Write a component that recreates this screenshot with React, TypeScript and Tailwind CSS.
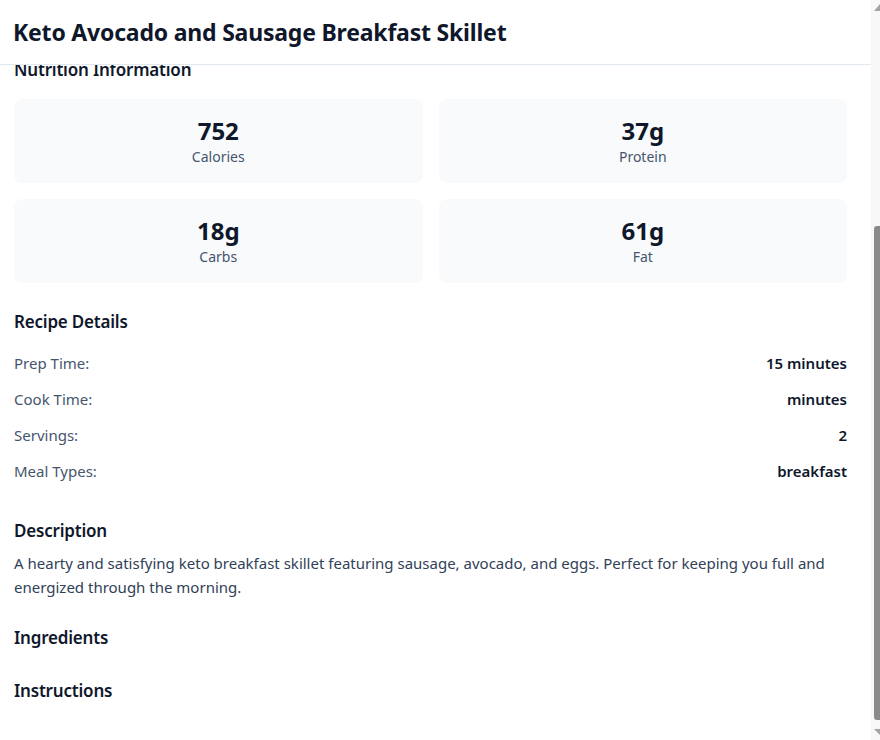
import { useLayoutEffect, useRef } from "react";

const nutrition = [
  { value: "752", label: "Calories" },
  { value: "37g", label: "Protein" },
  { value: "18g", label: "Carbs" },
  { value: "61g", label: "Fat" },
];

const details: [string, string][] = [
  ["Prep Time:", "15 minutes"],
  ["Cook Time:", "minutes"],
  ["Servings:", "2"],
  ["Meal Types:", "breakfast"],
];

function Heading({ children }: { children: React.ReactNode }) {
  return (
    <h3 className="pt-[2px] text-[17px] font-semibold leading-[26px] tracking-[-0.2px] text-slate-900">
      {children}
    </h3>
  );
}

export default function App() {
  const ref = useRef<HTMLDivElement>(null);
  useLayoutEffect(() => {
    if (ref.current) ref.current.scrollTop = 320;
  }, []);

  return (
    <div className="flex h-[740px] w-[880px] bg-white font-['Noto_Sans',sans-serif] text-slate-900">
      <div
        ref={ref}
        className="h-full min-w-0 flex-1 overflow-y-scroll [scrollbar-width:none] [&::-webkit-scrollbar]:hidden"
      >
        <header className="sticky top-0 z-10 flex h-[65px] items-center border-b border-slate-200 bg-white pl-[13px]">
          <h1 className="text-[23px] font-bold leading-8 tracking-[-0.2px] text-slate-900">
            Keto Avocado and Sausage Breakfast Skillet
          </h1>
        </header>

        <div className="pl-[14px] pr-6 pt-4 pb-12">
          <div className="mb-6 h-[270px] rounded-lg bg-gradient-to-br from-green-200 to-amber-200" />

          <section>
            <div className="mb-4">
              <Heading>Nutrition Information</Heading>
            </div>
            <div className="grid grid-cols-2 gap-4">
              {nutrition.map((n) => (
                <div key={n.label} className="rounded-lg bg-slate-50 p-4 text-center">
                  <div className="text-2xl font-bold leading-8 text-slate-900">{n.value}</div>
                  <div className="text-sm leading-5 text-slate-600">{n.label}</div>
                </div>
              ))}
            </div>
          </section>

          <section className="mt-6">
            <div className="mb-[10px]">
              <Heading>Recipe Details</Heading>
            </div>
            <div>
              {details.map(([k, v]) => (
                <div key={k} className="flex h-9 items-center justify-between text-[15px]">
                  <span className="text-slate-600">{k}</span>
                  <span className="font-semibold text-slate-900">{v}</span>
                </div>
              ))}
            </div>
          </section>

          <section className="mt-[27px]">
            <div className="mb-[7px]">
              <Heading>Description</Heading>
            </div>
            <p className="text-[15px] leading-6 text-slate-700">
              A hearty and satisfying keto breakfast skillet featuring sausage, avocado, and eggs. Perfect for keeping you full and energized through the morning.
            </p>
          </section>

          <section className="mt-6">
            <Heading>Ingredients</Heading>
          </section>

          <section className="mt-[25px]">
            <Heading>Instructions</Heading>
          </section>
        </div>
      </div>

      <div className="flex h-full w-[9px] shrink-0 flex-col bg-[#f8f8f8]">
        <svg width="9" height="12" viewBox="0 0 9 12" className="shrink-0">
          <polygon points="9,4 3,11 9,11" fill="#a3a3a3" />
        </svg>
        <div className="h-[214px] shrink-0" />
        <div className="ml-[3px] h-[494px] shrink-0 rounded-l-[3px] bg-[#8a8a8a]" />
        <div className="flex-1" />
        <svg width="9" height="12" viewBox="0 0 9 12" className="shrink-0">
          <polygon points="3,1 9,1 9,7" fill="#a3a3a3" />
        </svg>
      </div>
    </div>
  );
}
